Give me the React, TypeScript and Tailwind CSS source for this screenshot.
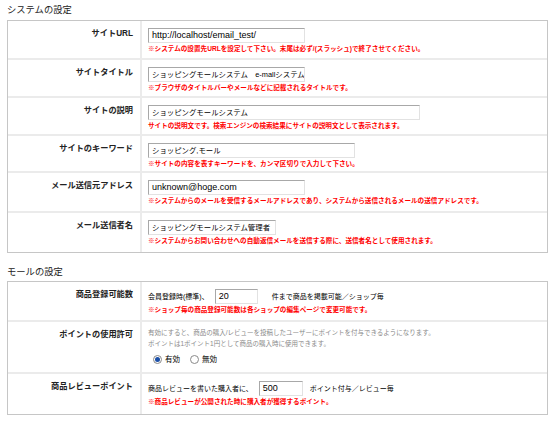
import React from "react";

const ff = "font-['Liberation_Sans','Noto_Sans_CJK_JP',sans-serif]";

function Field({ w, value, jp }: { w: string; value: string; jp?: boolean }) {
  return (
    <div
      className={`${w} h-[15px] flex items-center pl-[3px] bg-white border border-t-[#a8a8a8] border-l-[#a8a8a8] border-b-[#e2e2e2] border-r-[#e2e2e2] overflow-hidden whitespace-nowrap text-black ${
        jp ? "text-[7.4px]" : "text-[9px]"
      } leading-none`}
    >
      {value}
    </div>
  );
}

function Note({ children }: { children: React.ReactNode }) {
  return (
    <div className="mt-[1px] text-[6.6px] leading-[9px] text-[#ff0000] whitespace-nowrap font-bold">
      {children}
    </div>
  );
}

function Row({
  label,
  h,
  last,
  children,
  pt = "pt-[7px]",
}: {
  label: string;
  h: string;
  last?: boolean;
  children: React.ReactNode;
  pt?: string;
}) {
  return (
    <div className={`grid grid-cols-[134px_1fr] ${h} ${last ? "" : "border-b-2 border-[#ebebeb]"}`}>
      <div className="border-r-2 border-[#ebebeb] pr-[7px] pt-[8px] text-right text-[8.2px] leading-[10px] font-bold text-[#222] whitespace-nowrap">
        {label}
      </div>
      <div className={`pl-[6px] ${pt}`}>{children}</div>
    </div>
  );
}

function Radio({ checked }: { checked?: boolean }) {
  return (
    <span className="w-[9px] h-[9px] rounded-full border border-[#8a8a8a] bg-white flex items-center justify-center">
      {checked ? <span className="w-[5px] h-[5px] rounded-full bg-[#1b4fa8]" /> : null}
    </span>
  );
}

export default function App() {
  return (
    <div className={`w-[555px] h-[421px] bg-white overflow-hidden ${ff} text-black`}>
      <div className="pl-[7px] pt-[4px] h-[20px] text-[9.3px] leading-[12px] text-[#222]">システムの設定</div>
      <div className="mx-[7px] border border-[#c6c6c6]">
        <Row label="サイトURL" h="h-[39px]">
          <Field w="w-[157px]" value="http://localhost/email_test/" />
          <Note>※システムの設置先URLを設定して下さい。末尾は必ず/(スラッシュ)で終了させてください。</Note>
        </Row>
        <Row label="サイトタイトル" h="h-[38px]">
          <Field w="w-[157px]" jp value="ショッピングモールシステム　e-mallシステム" />
          <Note>※ブラウザのタイトルバーやメールなどに記載されるタイトルです。</Note>
        </Row>
        <Row label="サイトの説明" h="h-[38px]">
          <Field w="w-[272px]" jp value="ショッピングモールシステム" />
          <Note>サイトの説明文です。検索エンジンの検索結果にサイトの説明文として表示されます。</Note>
        </Row>
        <Row label="サイトのキーワード" h="h-[37px]">
          <Field w="w-[207px]" jp value="ショッピング,モール" />
          <Note>※サイトの内容を表すキーワードを、カンマ区切りで入力して下さい。</Note>
        </Row>
        <Row label="メール送信元アドレス" h="h-[40px]">
          <Field w="w-[157px]" value="unknown@hoge.com" />
          <Note>※システムからのメールを受信するメールアドレスであり、システムから送信されるメールの送信アドレスです。</Note>
        </Row>
        <Row label="メール送信者名" h="h-[39px]" last>
          <Field w="w-[128px]" jp value="ショッピングモールシステム管理者" />
          <Note>※システムからお問い合わせへの自動返信メールを送信する際に、送信者名として使用されます。</Note>
        </Row>
      </div>

      <div className="pl-[7px] pt-[13px] h-[28px] text-[9.3px] leading-[12px] text-[#222]">モールの設定</div>
      <div className="mx-[7px] border border-[#c6c6c6]">
        <Row label="商品登録可能数" h="h-[40px]">
          <div className="flex items-center text-[7px] leading-none whitespace-nowrap">
            <span>会員登録時(標準)、</span>
            <span className="ml-[6px]">
              <Field w="w-[43px]" value="20" />
            </span>
            <span className="ml-[14px]">件まで商品を掲載可能／ショップ毎</span>
          </div>
          <Note>※ショップ毎の商品登録可能数は各ショップの編集ページで変更可能です。</Note>
        </Row>
        <Row label="ポイントの使用許可" h="h-[52px]" pt="pt-[5px]">
          <div className="text-[6.5px] leading-[11px] text-[#8a8a8a] whitespace-nowrap">
            <div>有効にすると、商品の購入/レビューを投稿したユーザーにポイントを付与できるようになります。</div>
            <div>ポイントは1ポイント1円として商品の購入時に使用できます。</div>
          </div>
          <div className="mt-[6px] flex items-center gap-[3px] text-[7.5px] leading-none pl-[5px]">
            <Radio checked />
            <span>有効</span>
            <span className="ml-[7px]">
              <Radio />
            </span>
            <span>無効</span>
          </div>
        </Row>
        <Row label="商品レビューポイント" h="h-[40px]" last>
          <div className="flex items-center text-[7px] leading-none whitespace-nowrap">
            <span>商品レビューを書いた購入者に、</span>
            <span className="ml-[6px]">
              <Field w="w-[44px]" value="500" />
            </span>
            <span className="ml-[7px]">ポイント付与／レビュー毎</span>
          </div>
          <Note>※商品レビューが公開された時に購入者が獲得するポイント。</Note>
        </Row>
      </div>
    </div>
  );
}
